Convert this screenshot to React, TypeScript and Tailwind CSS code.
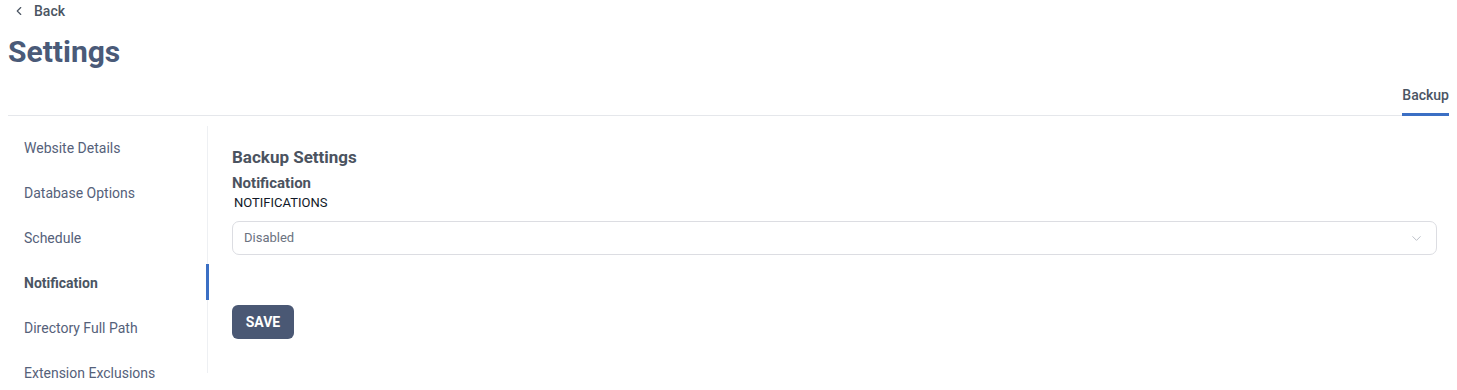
import { ChevronLeft, ChevronDown } from "lucide-react";

const menu = [
  "Website Details",
  "Database Options",
  "Schedule",
  "Notification",
  "Directory Full Path",
  "Extension Exclusions",
];

export default function App() {
  return (
    <div
      className="w-[1457px] h-[390px] overflow-hidden bg-white px-2"
      style={{ fontFamily: "Roboto, 'Liberation Sans', sans-serif" }}
    >
      <div className="flex items-center gap-2 h-[22px] pl-[4px] text-[14px] font-medium text-[#4b5563]">
        <ChevronLeft size={14} strokeWidth={2} className="text-[#4b5563]" />
        <span>Back</span>
      </div>
      <h1 className="mt-[10px] text-[30px] leading-[40px] font-bold text-[#4a5a78]">Settings</h1>

      <div className="mt-[15px] flex justify-end border-b border-[#e5e7eb]">
        <div className="h-[29px] text-[14px] font-medium text-[#4b5563] border-b-[3px] border-[#3b6fc4] -mb-px leading-[16px]">
          Backup
        </div>
      </div>

      <div className="flex mt-[12px]">
        <aside className="w-[200px] shrink-0 border-r border-[#eef0f3] h-[247px] -mt-[2px]">
          {menu.map((m) => (
            <div
              key={m}
              className={`relative h-[45px] flex items-center pl-[16px] text-[14px] ${
                m === "Notification" ? "font-bold text-[#4b5563]" : "text-[#55617a]"
              }`}
            >
              {m}
              {m === "Notification" && (
                <span className="absolute right-[-2px] top-[3px] h-[36px] w-[3px] bg-[#3b6fc4]" />
              )}
            </div>
          ))}
        </aside>

        <main className="flex-1 pl-[24px] pr-[12px] pt-[19px]">
          <h2 className="text-[17px] leading-[20px] font-bold text-[#4b5360]">Backup Settings</h2>
          <div className="mt-[7px] text-[15px] leading-[18px] font-bold text-[#4b5360]">Notification</div>
          <div className="mt-[3px] pl-[2px] text-[13px] leading-[16px] text-[#111827]">NOTIFICATIONS</div>
          <div className="mt-[10px] h-[34px] rounded-[7px] border border-[#dcdde2] flex items-center justify-between pl-[11px] pr-[12px]">
            <span className="text-[13px] text-[#6b7280]">Disabled</span>
            <ChevronDown size={15} strokeWidth={1.5} className="text-[#b8bcc4]" />
          </div>
          <button className="mt-[50px] h-[34px] w-[62px] rounded-[6px] bg-[#4a5874] text-white text-[14px] font-bold">
            SAVE
          </button>
        </main>
      </div>
    </div>
  );
}
